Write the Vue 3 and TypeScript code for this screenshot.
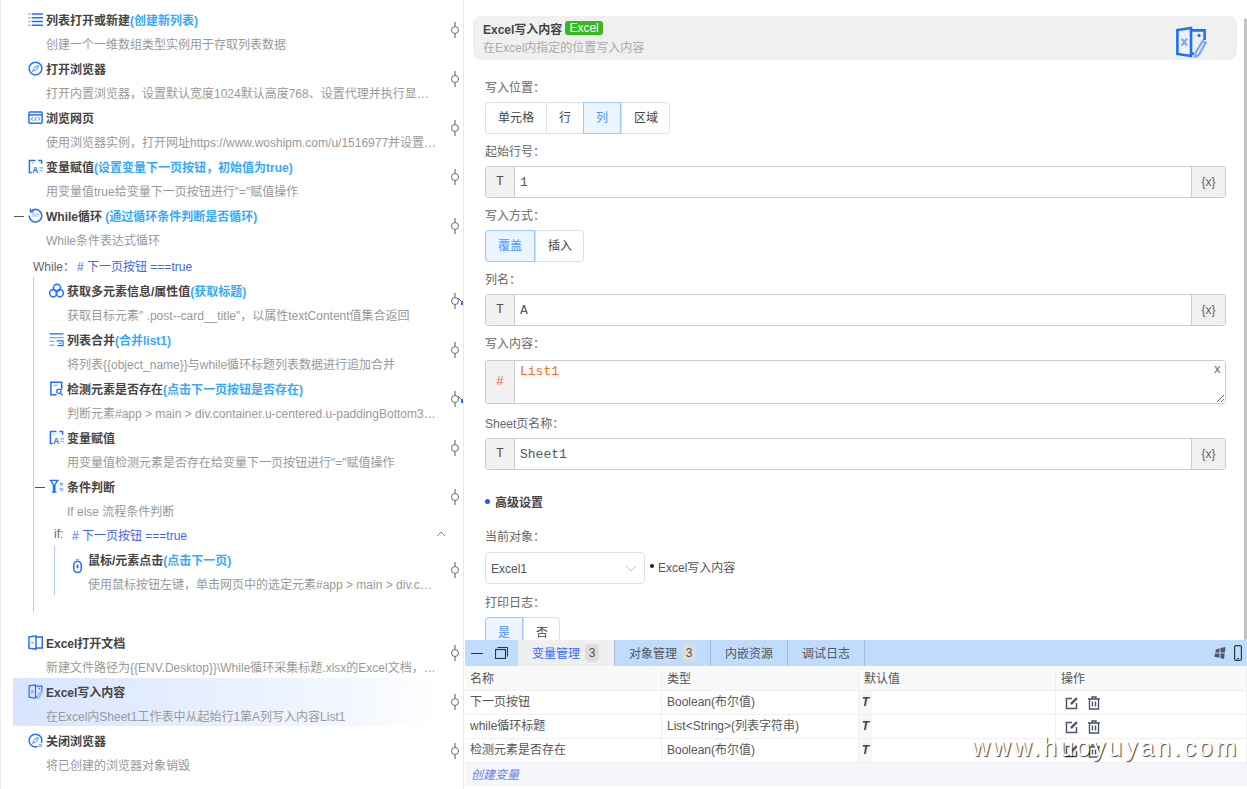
<template>
  <div class="page">
    <div class="tree">
      <template v-for="(item, i) in flow" :key="i">
        <div v-if="item.kind === 'step'" class="step" :class="'lv' + item.level">
          <div class="step-main" :class="{ current: item.current }">
            <span v-if="item.fold" class="fold"></span>
            <svg class="step-icon" :class="{ low: item.icon === 'mouse' }" viewBox="0 0 16 16" v-html="icons[item.icon]"></svg>
            <div class="step-text">
              <div class="step-title">{{ item.name }}<span v-if="item.note" class="step-note">{{ item.note }}</span></div>
              <div class="step-desc">{{ item.desc }}</div>
            </div>
          </div>
          <svg class="port" viewBox="0 0 16 16">
            <path d="M8 0v4M8 12v4" stroke="#555" fill="none" />
            <circle cx="8" cy="8" r="3.5" fill="#fff" stroke="#667" />
            <path v-if="item.hit" d="M11 5l3 3" stroke="#667" fill="none" />
            <rect v-if="item.hit" x="14" y="8" width="2" height="4" fill="#1677ff" />
          </svg>
        </div>
        <div v-else-if="item.kind === 'cond'" class="cond" :class="'lv' + item.level">
          <span class="cond-key">{{ item.label }}</span>
          <span class="cond-expr">{{ item.expr }}</span>
          <svg v-if="item.level" class="cond-arrow" viewBox="0 0 10 6"><path d="M1 5l4-4 4 4" fill="none" stroke="#888" /></svg>
        </div>
        <div v-else class="spacer" :class="'lv' + item.level"></div>
      </template>
    </div>

    <div class="side">
      <div class="editor">
        <div class="head">
          <div>
            <div class="head-title">Excel写入内容<span class="tag">Excel</span></div>
            <div class="head-desc">在Excel内指定的位置写入内容</div>
          </div>
          <svg class="head-icon" viewBox="0 0 16 16" v-html="icons.excelWrite"></svg>
        </div>

        <div class="form">
          <div class="field first">
            <div class="field-label">写入位置：</div>
            <div class="group">
              <span v-for="o in positions" :key="o" class="group-item" :class="{ on: o === '列' }">{{ o }}</span>
            </div>
          </div>
          <div class="field">
            <div class="field-label">起始行号：</div>
            <div class="input">
              <span class="input-type">T</span>
              <input class="input-box" readonly value="1" />
              <span class="input-var">{x}</span>
            </div>
          </div>
          <div class="field">
            <div class="field-label">写入方式：</div>
            <div class="group">
              <span class="group-item wide on">覆盖</span>
              <span class="group-item wide">插入</span>
            </div>
          </div>
          <div class="field">
            <div class="field-label">列名：</div>
            <div class="input">
              <span class="input-type">T</span>
              <input class="input-box" readonly value="A" />
              <span class="input-var">{x}</span>
            </div>
          </div>
          <div class="field tall">
            <div class="field-label">写入内容：</div>
            <div class="input area">
              <span class="input-type hash">#</span>
              <textarea class="input-box area-box" readonly>List1</textarea>
              <span class="area-clear">x</span>
            </div>
          </div>
          <div class="field">
            <div class="field-label">Sheet页名称：</div>
            <div class="input">
              <span class="input-type">T</span>
              <input class="input-box" readonly value="Sheet1" />
              <span class="input-var">{x}</span>
            </div>
          </div>

          <div class="section"><i class="section-dot"></i>高级设置</div>

          <div class="field obj">
            <div class="field-label">当前对象：</div>
            <div class="obj-row">
              <div class="select">
                <span>Excel1</span>
                <svg width="12" height="7" viewBox="0 0 12 7"><path d="M1 1l5 5 5-5" fill="none" stroke="#c0c4cc" /></svg>
              </div>
              <span class="obj-name"><i class="obj-dot"></i>Excel写入内容</span>
            </div>
          </div>
          <div class="field log">
            <div class="field-label">打印日志：</div>
            <div class="group">
              <span class="group-item small on">是</span>
              <span class="group-item small">否</span>
            </div>
          </div>
        </div>
        <div class="scrollbar"></div>
      </div>

      <div class="dock">
        <div class="tabs">
          <div class="tabs-ctrl">
            <span class="tabs-min"></span>
            <svg width="13" height="12" viewBox="0 0 13 12"><rect x="0.5" y="2.5" width="10" height="9" fill="none" stroke="#333" stroke-width="1.200" /><path d="M2.5 0.5h10v9" fill="none" stroke="#333" /></svg>
          </div>
          <div v-for="t in tabs" :key="t.name" class="tab" :class="{ on: t.on }">
            {{ t.name }}<span v-if="t.count" class="tab-count">{{ t.count }}</span>
          </div>
          <div class="tabs-right">
            <svg width="12" height="12" viewBox="0 0 12 12"><path d="M2 2.500l3.500-1.200V5.500H1.200zM6.500 1l5-1.000-.7 5.500H6.500zM1 6.500h4.500v4.300L.4 9.800zM6.500 6.500h4.200l-.7 5.500-3.500-1z" fill="#556" /></svg>
            <svg width="8" height="16" viewBox="0 0 8 16"><rect x="0.600" y="0.600" width="6.800" height="14.800" rx="1.500" fill="none" stroke="#333" stroke-width="1.200" /><path d="M3 13.500h2" stroke="#333" /></svg>
          </div>
        </div>
        <div class="row row-head">
          <span>名称</span><span>类型</span><span>默认值</span><span>操作</span>
        </div>
        <div v-for="v in variables" :key="v.name" class="row">
          <span>{{ v.name }}</span>
          <span>{{ v.type }}</span>
          <span class="row-default"><b class="row-t">T</b></span>
          <span class="row-ops">
            <svg width="14" height="14" viewBox="0 0 14 14"><path d="M11.500 7v5.500h-10v-10H7" fill="none" stroke="#4a5568" stroke-width="1.500" /><path d="M5.500 8.500V6.800L11 1.300l1.700 1.700-5.500 5.500z" fill="#4a5568" /></svg>
            <svg width="14" height="14" viewBox="0 0 14 14"><path d="M1 3h12M5 3V1h4v2M2.500 3v10h9V3M5.500 5.500v5M8.500 5.500v5" fill="none" stroke="#4a5568" stroke-width="1.400" /></svg>
          </span>
        </div>
        <div class="create">创建变量</div>
      </div>
    </div>

    <div class="watermark">www.huoyuyan.com</div>
  </div>
</template>

<script setup lang="ts">
type Step = {
  kind: 'step'
  level: number
  icon: string
  name: string
  note?: string
  desc: string
  fold?: boolean
  hit?: boolean
  current?: boolean
}
type Cond = { kind: 'cond'; level: number; label: string; expr: string }
type Spacer = { kind: 'spacer'; level: number }

const B = '#1f6fff'
const L = '#7aa8ff'

// 流程图标
const icons: Record<string, string> = {
  list: `<path d="M4 2h12M4 6h12M4 10h12M4 14h12" stroke="${B}" stroke-width="1.600"/><path d="M0.500 2h2M0.500 6h2M0.500 10h2M0.500 14h2" stroke="${L}" stroke-width="1.600"/>`,
  compass: `<circle cx="8" cy="8" r="6.800" fill="none" stroke="${B}" stroke-width="1.600"/><path d="M11.300 4.700L9.200 9.200 4.700 11.300l2.100-4.500z" fill="none" stroke="${L}" stroke-width="1.300"/>`,
  web: `<rect x="1" y="2" width="14" height="12" rx="1" fill="none" stroke="${B}" stroke-width="1.600"/><path d="M1 5.200h14" stroke="${B}" stroke-width="1.600"/><path d="M5.500 7.500L3.500 9.500l2 2M10.500 7.500l2 2-2 2M8.700 7.500l-1.400 4" fill="none" stroke="${B}"/>`,
  assign: `<path d="M8 1.500H1.500v13H4M11 1.500h3.500V5" fill="none" stroke="${B}" stroke-width="1.600"/><path d="M4 4.500h2M12 9.500h4M12 12.500h4" stroke="${L}" stroke-width="1.200"/><text x="4.500" y="14.500" font-size="9" font-weight="700" font-family="Liberation Sans" fill="${B}">A</text>`,
  loop: `<path d="M3.200 3.500A6.700 6.700 0 1 1 1.300 8" fill="none" stroke="${B}" stroke-width="1.600"/><path d="M2.500 0.500v3.700h3.700" fill="none" stroke="${B}" stroke-width="1.300"/><text x="3.600" y="10" font-size="5.500" font-family="Liberation Sans" fill="${L}">Wh</text>`,
  attrs: `<circle cx="8.500" cy="5" r="3.800" fill="none" stroke="${B}" stroke-width="1.600"/><circle cx="4.500" cy="10.800" r="3.800" fill="none" stroke="${B}" stroke-width="1.600"/><circle cx="11.500" cy="10.800" r="3.800" fill="none" stroke="${B}" stroke-width="1.600"/>`,
  merge: `<path d="M0.500 2h15" stroke="${B}" stroke-width="1.400"/><path d="M0.500 6h15M0.500 10h5M0.500 14h5" stroke="${L}" stroke-width="1.400"/><path d="M8 9.500h7V14.500H9" fill="none" stroke="${B}" stroke-width="1.300"/><path d="M10.500 12h3" stroke="${B}"/>`,
  detect: `<path d="M8 14.700H2v-13.500H13.500V9" fill="none" stroke="${B}" stroke-width="1.600"/><path d="M4.500 4.500h5" stroke="${L}" stroke-width="1.200"/><circle cx="10.500" cy="11" r="2.300" fill="none" stroke="${B}" stroke-width="1.300"/><path d="M12 12.800l2.500 2.500" stroke="${B}" stroke-width="1.400"/>`,
  filter: `<path d="M0.500 1.500h10M2 1.500l2.800 5v7h1.400v-7l2.800-5M3 14h5" fill="none" stroke="${B}" stroke-width="1.500"/><path d="M11.500 4l3.500 3M15 4l-3.500 3M11.500 9.500l3.500 3M15 9.500l-3.500 3" stroke="${L}" stroke-width="1.200"/>`,
  mouse: `<rect x="4" y="3.500" width="8" height="12" rx="4" fill="none" stroke="${B}" stroke-width="1.600"/><rect x="7" y="7" width="2" height="4" rx="1" fill="${B}"/><path d="M6 1.500h4" stroke="${L}"/>`,
  excel: `<path d="M8.500 1L1 2v12l7.500 1z" fill="none" stroke="${B}" stroke-width="1.600"/><path d="M8.500 2.200h6.700v11.600H8.500" fill="none" stroke="${B}" stroke-width="1.600"/><path d="M3.300 6.300l3 3.500M6.300 6.300l-3 3.500" stroke="${L}"/>`,
  excelWrite: `<path d="M8 1L1.200 2v12L8 15z" fill="none" stroke="${B}" stroke-width="1.300"/><path d="M8 2.200h6.800V7M8 13.800h1.500" fill="none" stroke="${B}" stroke-width="1.300"/><path d="M3.300 6.300l2.700 3.500M6 6.300L3.300 9.800" stroke="${L}" stroke-width="1.100"/><circle cx="12" cy="4.700" r=".8" fill="${B}"/><path d="M13.800 7.500l1.500.9-3.300 5.900-1.900 1.200.3-2.300z" fill="none" stroke="${L}" stroke-width="1.100"/>`,
  close: `<circle cx="8" cy="8" r="6.800" fill="none" stroke="${B}" stroke-width="1.600"/><path d="M11 4.800L9.200 9.200 5 11l1.800-4.400z" fill="none" stroke="${L}" stroke-width="1.200"/><rect x="10.500" y="10.500" width="5.500" height="5.500" fill="#fff"/><path d="M11.500 11.500l3.500 3.500M15 11.500L11.500 15" stroke="${L}" stroke-width="1.200"/>`,
}

// 流程步骤
const flow: (Step | Cond | Spacer)[] = [
  { kind: 'step', level: 0, icon: 'list', name: '列表打开或新建', note: '(创建新列表)', desc: '创建一个一维数组类型实例用于存取列表数据' },
  { kind: 'step', level: 0, icon: 'compass', name: '打开浏览器', desc: '打开内置浏览器，设置默认宽度1024默认高度768、设置代理并执行显…' },
  { kind: 'step', level: 0, icon: 'web', name: '浏览网页', desc: '使用浏览器实例，打开网址https://www.woshipm.com/u/1516977并设置…' },
  { kind: 'step', level: 0, icon: 'assign', name: '变量赋值', note: '(设置变量下一页按钮，初始值为true)', desc: '用变量值true给变量下一页按钮进行"="赋值操作' },
  { kind: 'step', level: 0, icon: 'loop', name: 'While循环', note: ' (通过循环条件判断是否循环)', desc: 'While条件表达式循环', fold: true },
  { kind: 'cond', level: 0, label: 'While：', expr: '# 下一页按钮 ===true' },
  { kind: 'step', level: 1, icon: 'attrs', name: '获取多元素信息/属性值', note: '(获取标题)', desc: '获取目标元素" .post--card__title"，以属性textContent值集合返回', hit: true },
  { kind: 'step', level: 1, icon: 'merge', name: '列表合并', note: '(合并list1)', desc: '将列表{{object_name}}与while循环标题列表数据进行追加合并' },
  { kind: 'step', level: 1, icon: 'detect', name: '检测元素是否存在', note: '(点击下一页按钮是否存在)', desc: '判断元素#app > main > div.container.u-centered.u-paddingBottom3…', hit: true },
  { kind: 'step', level: 1, icon: 'assign', name: '变量赋值', desc: '用变量值检测元素是否存在给变量下一页按钮进行"="赋值操作' },
  { kind: 'step', level: 1, icon: 'filter', name: '条件判断', desc: 'If else 流程条件判断', fold: true },
  { kind: 'cond', level: 1, label: 'if:', expr: '# 下一页按钮 ===true' },
  { kind: 'step', level: 2, icon: 'mouse', name: '鼠标/元素点击', note: '(点击下一页)', desc: '使用鼠标按钮左键，单击网页中的选定元素#app > main > div.c…' },
  { kind: 'spacer', level: 1 },
  { kind: 'spacer', level: 0 },
  { kind: 'step', level: 0, icon: 'excel', name: 'Excel打开文档', desc: '新建文件路径为{{ENV.Desktop}}\\While循环采集标题.xlsx的Excel文档，…' },
  { kind: 'step', level: 0, icon: 'excelWrite', name: 'Excel写入内容', desc: '在Excel内Sheet1工作表中从起始行1第A列写入内容List1', current: true },
  { kind: 'step', level: 0, icon: 'close', name: '关闭浏览器', desc: '将已创建的浏览器对象销毁' },
]

const positions = ['单元格', '行', '列', '区域']

const tabs = [
  { name: '变量管理', count: 3, on: true },
  { name: '对象管理', count: 3 },
  { name: '内嵌资源' },
  { name: '调试日志' },
]

const variables = [
  { name: '下一页按钮', type: 'Boolean(布尔值)' },
  { name: 'while循环标题', type: 'List<String>(列表字符串)' },
  { name: '检测元素是否存在', type: 'Boolean(布尔值)' },
]
</script>

<style>
html,
body {
  margin: 0;
  background: #fff;
  overflow: hidden;
}
</style>

<style scoped>
.page {
  position: relative;
  display: flex;
  height: 789px;
  overflow: hidden;
  font-family: "Liberation Sans", "Noto Sans CJK SC", sans-serif;
  font-size: 12px;
  color: #555;
}

/* 左侧流程 */
.tree {
  flex: none;
  width: 464px;
  box-sizing: border-box;
  padding-top: 6px;
  box-shadow: inset 1px 0 #eee, inset -1px 0 #e8e8e8;
}
.lv1 {
  background: linear-gradient(#b9cdf5, #b9cdf5) 33px 0 / 1px 100% no-repeat;
}
.lv2 {
  background:
    linear-gradient(#b9cdf5, #b9cdf5) 33px 0 / 1px 100% no-repeat,
    linear-gradient(#b9cdf5, #b9cdf5) 54px 0 / 1px 100% no-repeat;
}
.step {
  display: flex;
  height: 49px;
  padding-left: 13px;
}
.step.lv1 {
  padding-left: 34px;
}
.step.lv2 {
  padding-left: 55px;
}
.step-main {
  position: relative;
  flex: 1;
  display: flex;
  min-width: 0;
  height: 48px;
  margin-right: 7px;
  padding-left: 15px;
}
.step-main.current {
  background: linear-gradient(90deg, #d8e5ff, #f3f7ff 80%, #fff);
}
.fold {
  position: absolute;
  left: 1px;
  top: 14px;
  width: 10px;
  height: 1px;
  background: #555;
}
.step-icon {
  flex: none;
  width: 15px;
  height: 15px;
  margin: 6px 3px 0 0;
}
.step-icon.low {
  margin-top: 12px;
}
.step-text {
  flex: 1;
  min-width: 0;
  padding-top: 6px;
}
.step-title {
  height: 18px;
  line-height: 18px;
  font-weight: 700;
  color: #444;
  white-space: pre;
}
.step-note {
  color: #36a9fb;
}
.step-desc {
  height: 18px;
  margin-top: 6px;
  line-height: 18px;
  color: #999;
  white-space: nowrap;
}
.port {
  flex: none;
  width: 16px;
  height: 16px;
  margin: 16px 1px 0 0;
}
.cond {
  display: flex;
  align-items: center;
  height: 26px;
  padding: 3px 0 0 33px;
  box-sizing: border-box;
}
.cond.lv1 {
  height: 24px;
  padding: 0 0 0 54px;
}
.cond-key {
  color: #666;
  margin-right: 2px;
}
.cond.lv1 .cond-key {
  width: 16px;
}
.cond-expr {
  color: #3f67ea;
}
.cond-arrow {
  width: 10px;
  height: 6px;
  margin: 0 18px 0 auto;
}
.spacer {
  height: 17px;
}

/* 右侧属性 */
.side {
  flex: 1;
  min-width: 0;
  margin-left: 1px;
  display: flex;
  flex-direction: column;
}
.editor {
  position: relative;
  height: 640px;
  box-sizing: border-box;
  padding: 16px 10px 0 8px;
  overflow: hidden;
}
.scrollbar {
  position: absolute;
  top: 18px;
  right: 0;
  bottom: 0;
  width: 3px;
  border-radius: 2px;
  background: #c4c4c4;
}
.head {
  display: flex;
  justify-content: space-between;
  height: 44px;
  padding: 4px 30px 0 10px;
  box-sizing: border-box;
  background: #f0f0f0;
  border-radius: 8px;
}
.head-title {
  display: flex;
  align-items: center;
  height: 16px;
  font-weight: 700;
  color: #444;
}
.tag {
  height: 14px;
  margin-left: 3px;
  padding: 0 4px;
  line-height: 14px;
  font-weight: 400;
  color: #fff;
  background: #38b81c;
  border-radius: 3px;
}
.head-desc {
  margin-top: 4px;
  line-height: 16px;
  color: #aaa;
}
.head-icon {
  width: 32px;
  height: 32px;
  margin-top: 6px;
}
.form {
  padding: 0 11px 0 12px;
}
.field {
  margin-top: 9px;
}
.field.first {
  margin-top: 19px;
}
.field-label {
  height: 15px;
  margin-bottom: 7px;
  padding-top: 1px;
  line-height: 16px;
  color: #666;
}
.group {
  display: inline-flex;
  height: 32px;
  box-sizing: border-box;
  border: 1px solid #dcdfe6;
  border-radius: 4px;
}
.group-item {
  padding: 0 12px;
  line-height: 30px;
  color: #444;
  border-left: 1px solid #dcdfe6;
}
.group-item:first-child {
  border-left: 0;
}
.group-item:last-child {
  padding-right: 11px;
}
.group-item.on {
  margin: -1px 0;
  color: #4b96ff;
  background: #ecf4ff;
  border: 1px solid #9cc8ff;
}
.group-item:first-child.on {
  margin-left: -1px;
  border-radius: 4px 0 0 4px;
}
.group-item.wide {
  width: 24px;
  text-align: center;
}
.group-item.small {
  width: 12px;
}
.input {
  position: relative;
  display: flex;
  height: 32px;
  box-sizing: border-box;
  border: 1px solid #ccc;
  border-radius: 3px;
}
.input-type {
  flex: none;
  width: 28px;
  font-family: "Liberation Mono", monospace;
  font-size: 13px;
  line-height: 30px;
  text-align: center;
  color: #555;
  background: #f0f0f0;
  border-right: 1px solid #ccc;
  border-radius: 3px 0 0 3px;
}
.input-box {
  flex: 1;
  min-width: 0;
  height: 100%;
  box-sizing: border-box;
  padding: 0 5px;
  font-family: "Liberation Mono", monospace;
  font-size: 13px;
  color: #555;
  border: 0;
  outline: 0;
  background: #fff;
}
.input-var {
  flex: none;
  width: 33px;
  line-height: 30px;
  text-align: center;
  color: #666;
  background: #f0f0f0;
  border-left: 1px solid #ccc;
  border-radius: 0 3px 3px 0;
}
.tall .field-label {
  margin-bottom: 9px;
}
.tall {
  margin-bottom: 11px;
}
.input.area {
  height: 44px;
}
.hash {
  line-height: 42px;
  color: #ff6a1f;
}
.area-box {
  padding: 3px 5px;
  line-height: 16px;
  color: #ff6a1f;
}
.area-clear {
  position: absolute;
  right: 4px;
  top: 2px;
  font-family: "Liberation Mono", monospace;
  color: #666;
}
.section {
  display: flex;
  align-items: center;
  height: 16px;
  margin-top: 23px;
  font-weight: 700;
  color: #444;
}
.section-dot {
  width: 5px;
  height: 5px;
  margin-right: 5px;
  border-radius: 50%;
  background: #1763e8;
}
.obj {
  margin-top: 19px;
}
.obj .field-label {
  margin-bottom: 8px;
}
.obj-row {
  display: flex;
}
.select {
  display: flex;
  align-items: center;
  justify-content: space-between;
  width: 160px;
  height: 32px;
  box-sizing: border-box;
  padding: 1px 7px 0 5px;
  color: #555;
  border: 1px solid #dcdfe6;
  border-radius: 4px;
}
.obj-name {
  display: flex;
  align-items: center;
  height: 28px;
  margin-left: 5px;
  color: #555;
}
.obj-dot {
  width: 4px;
  height: 4px;
  margin-right: 4px;
  border-radius: 50%;
  background: #222;
}
.log {
  margin-top: 10px;
}

/* 底部面板 */
.dock {
  flex: 1;
  min-height: 0;
}
.tabs {
  display: flex;
  align-items: stretch;
  height: 26px;
  background: #bfdcff;
}
.tabs-ctrl {
  flex: none;
  display: flex;
  align-items: center;
  width: 53px;
  box-sizing: border-box;
  padding-left: 6px;
}
.tabs-min {
  width: 12px;
  height: 1px;
  margin-right: 12px;
  background: #333;
}
.tab {
  display: flex;
  align-items: center;
  padding: 0 14px 2px;
  color: #555;
  border-right: 1px solid #a8bdd4;
}
.tab.on {
  padding-right: 15px;
  color: #2f6bff;
  background: #efefef;
}
.tab-count {
  width: 14px;
  height: 18px;
  margin: 2px 0 0 5px;
  line-height: 18px;
  text-align: center;
  color: #555;
  background: #ddd;
  border-radius: 4px;
}
.tabs-right {
  display: flex;
  align-items: center;
  gap: 8px;
  margin-left: auto;
  padding-right: 5px;
}
.row {
  display: grid;
  grid-template-columns: 197px 197px 197px 1fr;
  height: 24px;
  box-sizing: border-box;
  line-height: 23px;
  color: #555;
  border-bottom: 1px solid #f0f0f0;
}
.row > span {
  padding-left: 5px;
  border-right: 1px solid #f0f0f0;
  white-space: nowrap;
}
.row-head {
  height: 25px;
  padding-top: 2px;
  background: #f8f9f9;
}
.row > .row-default {
  padding-left: 0;
}
.row-t {
  display: block;
  width: 13px;
  text-align: center;
  font-style: italic;
  color: #444;
  background: #f7f7f7;
}
.row-ops {
  display: flex;
  align-items: center;
  gap: 8px;
}
.row > .row-ops {
  padding-left: 9px;
}
.create {
  height: 23px;
  padding-left: 6px;
  line-height: 24px;
  font-style: italic;
  color: #6a7fe0;
  background: #f4f6fb;
}
.watermark {
  position: absolute;
  left: 972px;
  top: 732px;
  font-size: 25px;
  line-height: 30px;
  letter-spacing: 2.800px;
  color: #fff;
  text-shadow: 1px 1px 1px rgba(0, 0, 0, 0.75);
}
</style>
